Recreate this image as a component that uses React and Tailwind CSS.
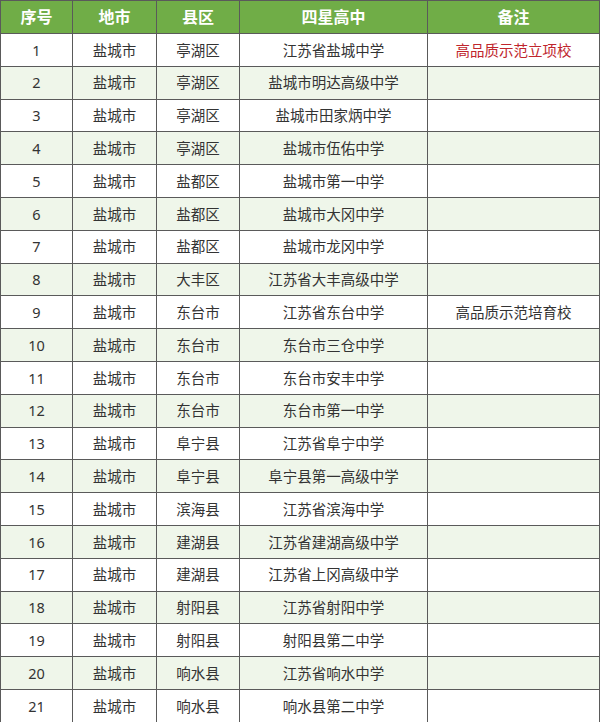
import React from "react"

const rows = [
  ["1", "盐城市", "亭湖区", "江苏省盐城中学", "高品质示范立项校", "red"],
  ["2", "盐城市", "亭湖区", "盐城市明达高级中学", ""],
  ["3", "盐城市", "亭湖区", "盐城市田家炳中学", ""],
  ["4", "盐城市", "亭湖区", "盐城市伍佑中学", ""],
  ["5", "盐城市", "盐都区", "盐城市第一中学", ""],
  ["6", "盐城市", "盐都区", "盐城市大冈中学", ""],
  ["7", "盐城市", "盐都区", "盐城市龙冈中学", ""],
  ["8", "盐城市", "大丰区", "江苏省大丰高级中学", ""],
  ["9", "盐城市", "东台市", "江苏省东台中学", "高品质示范培育校"],
  ["10", "盐城市", "东台市", "东台市三仓中学", ""],
  ["11", "盐城市", "东台市", "东台市安丰中学", ""],
  ["12", "盐城市", "东台市", "东台市第一中学", ""],
  ["13", "盐城市", "阜宁县", "江苏省阜宁中学", ""],
  ["14", "盐城市", "阜宁县", "阜宁县第一高级中学", ""],
  ["15", "盐城市", "滨海县", "江苏省滨海中学", ""],
  ["16", "盐城市", "建湖县", "江苏省建湖高级中学", ""],
  ["17", "盐城市", "建湖县", "江苏省上冈高级中学", ""],
  ["18", "盐城市", "射阳县", "江苏省射阳中学", ""],
  ["19", "盐城市", "射阳县", "射阳县第二中学", ""],
  ["20", "盐城市", "响水县", "江苏省响水中学", ""],
  ["21", "盐城市", "响水县", "响水县第二中学", ""],
]

const headers = ["序号", "地市", "县区", "四星高中", "备注"]

export default function App() {
  return (
    <div
      className="w-[600px] h-[722px] overflow-hidden bg-white"
      style={{ fontFamily: '"Noto Sans", "Noto Sans CJK SC", sans-serif' }}
    >
      <table className="w-[599px] table-fixed border-collapse">
        <colgroup>
          <col className="w-[72px]" />
          <col className="w-[84px]" />
          <col className="w-[83px]" />
          <col className="w-[188px]" />
          <col className="w-[172px]" />
        </colgroup>
        <thead>
          <tr className="h-[33px] bg-[#70ad47]">
            {headers.map((h) => (
              <th
                key={h}
                className="border border-[#5a5a5a] text-white text-[16px] font-bold text-center p-0 leading-none"
              >
                {h}
              </th>
            ))}
          </tr>
        </thead>
        <tbody>
          {rows.map((r, i) => (
            <tr
              key={r[0]}
              className={`h-[32.8px] ${i % 2 === 1 ? "bg-[#eff6ea]" : "bg-white"}`}
            >
              {r.slice(0, 5).map((c, j) => (
                <td
                  key={j}
                  className={`border border-[#5a5a5a] text-center p-0 leading-none text-[14.5px] ${
                    j === 4 && r[5] === "red" ? "text-[#c0262d]" : "text-[#333333]"
                  }`}
                >
                  {c}
                </td>
              ))}
            </tr>
          ))}
        </tbody>
      </table>
    </div>
  )
}
